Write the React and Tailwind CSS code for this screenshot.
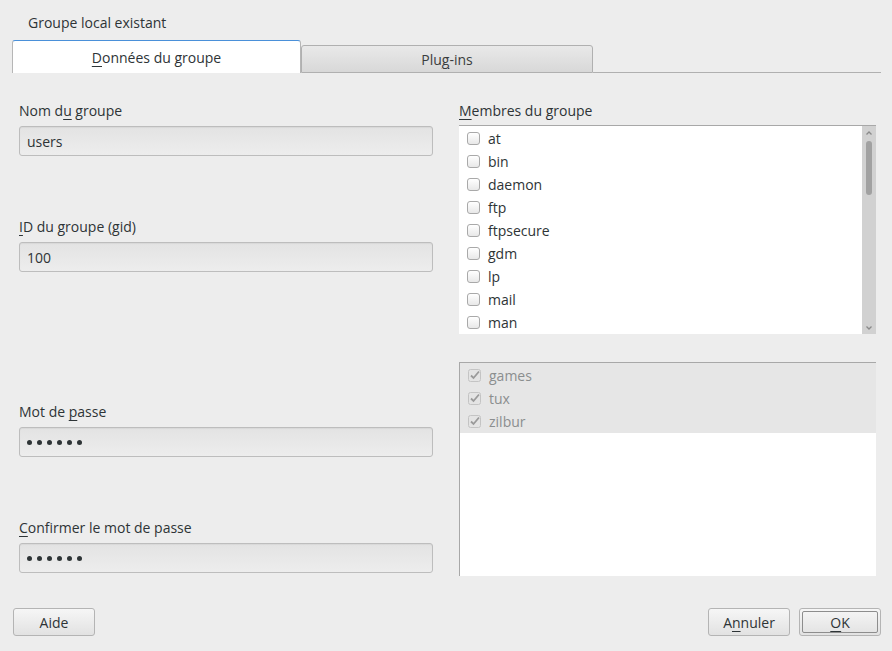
import React from "react";

const font = { fontFamily: '"Open Sans", "Noto Sans", sans-serif' };

function U({ children }) {
  return <span className="underline underline-offset-[3px] decoration-1">{children}</span>;
}

function Field({ label, value, mt }) {
  return (
    <div className={mt}>
      <div className="h-[18px] leading-[18px] text-[14px] text-[#2e3436]">{label}</div>
      <div className="mt-[6px] h-[30px] w-[414px] rounded-[3px] border border-[#bdbdbd] bg-gradient-to-b from-[#e3e3e3] to-[#ededed] shadow-[inset_0_1px_1px_rgba(0,0,0,0.05)] flex items-center px-[7px] text-[14px] text-[#2e3436]">
        {value}
      </div>
    </div>
  );
}

function Dots() {
  return (
    <div className="flex gap-[5px]">
      {[0, 1, 2, 3, 4, 5].map((i) => (
        <span key={i} className="block w-[5px] h-[5px] rounded-full bg-[#2e3436]" />
      ))}
    </div>
  );
}

function Box({ checked }) {
  if (checked) {
    return (
      <svg width="13" height="13" viewBox="0 0 13 13" className="shrink-0">
        <rect x="0.5" y="0.5" width="12" height="12" rx="2" fill="#e4e4e4" stroke="#c4c4c4" />
        <path d="M3 6.5 L5.5 9 L11 2.5" fill="none" stroke="#9a9a9a" strokeWidth="1.8" />
      </svg>
    );
  }
  return (
    <span className="block shrink-0 w-[13px] h-[13px] rounded-[3px] border border-[#a9a9a9] bg-gradient-to-b from-[#ffffff] to-[#e8e8e8]" />
  );
}

function Row({ name, checked }) {
  return (
    <div className="h-[23px] flex items-center pl-[8px] gap-[8px]">
      <Box checked={checked} />
      <span className={"text-[14px] " + (checked ? "text-[#8b8e8f]" : "text-[#2e3436]")}>{name}</span>
    </div>
  );
}

function Button({ children, focus }) {
  return (
    <div className="w-[82px] h-[28px] rounded-[3px] border border-[#b4b4b4] bg-gradient-to-b from-[#f6f6f6] to-[#e2e2e2] flex items-center justify-center p-[2px]">
      <div className={"w-full h-full flex items-center justify-center text-[14px] text-[#2e3436] " + (focus ? "border border-[#8d8d8d] rounded-[2px]" : "")}>
        {children}
      </div>
    </div>
  );
}

export default function App() {
  const members = ["at", "bin", "daemon", "ftp", "ftpsecure", "gdm", "lp", "mail", "man"];
  return (
    <div style={font} className="w-[892px] h-[651px] bg-[#ededed] flex flex-col overflow-hidden text-[#2e3436]">
      <div className="h-[40px] pl-[28px] pt-[14px] text-[14px] leading-[18px]">Groupe local existant</div>
      <div className="flex items-end h-[33px] pl-[12px] pr-[11px]">
        <div className="w-[289px] h-[33px] bg-white rounded-t-[3px] border border-b-0 border-[#b6b6b6] border-t-[#4a90d9] flex items-center justify-center text-[14px] pt-[1px]">
          <span>
            <U>D</U>onnées du groupe
          </span>
        </div>
        <div className="w-[292px] h-[28px] rounded-t-[3px] border border-[#b0b0b0] bg-gradient-to-b from-[#e9e9e9] to-[#d8d8d8] flex items-center justify-center text-[14px] text-[#3a3d3e]">
          <span>
            Plu<U>g</U>-ins
          </span>
        </div>
        <div className="flex-1 h-[1px] bg-[#b0b0b0]" />
      </div>
      <div className="flex flex-1">
        <div className="w-[414px] ml-[19px] pt-[29px]">
          <Field label={<span>Nom d<U>u</U> groupe</span>} value="users" />
          <Field mt="mt-[62px]" label={<span><U>I</U>D du groupe (gid)</span>} value="100" />
          <Field mt="mt-[131px]" label={<span>Mot de <U>p</U>asse</span>} value={<Dots />} />
          <Field mt="mt-[62px]" label={<span><U>C</U>onfirmer le mot de passe</span>} value={<Dots />} />
        </div>
        <div className="w-[417px] ml-[26px] pt-[29px] flex flex-col">
          <div className="h-[18px] leading-[18px] text-[14px]">
            <U>M</U>embres du groupe
          </div>
          <div className="mt-[5px] h-[209px] bg-white border-t border-[#a8a8a8] flex">
            <div className="flex-1 pt-[1px] overflow-hidden">
              {members.map((m) => (
                <Row key={m} name={m} />
              ))}
            </div>
            <div className="w-[14px] bg-[#d1d1d1] flex flex-col items-center">
              <svg width="8" height="6" viewBox="0 0 8 6" className="mt-[4px]">
                <path d="M1.5 4.5 L4 2 L6.5 4.5" fill="none" stroke="#8a8a8a" strokeWidth="1.3" />
              </svg>
              <div className="mt-[5px] w-[6px] h-[54px] rounded-full bg-[#a1a1a1]" />
              <div className="flex-1" />
              <svg width="8" height="6" viewBox="0 0 8 6" className="mb-[3px]">
                <path d="M1.5 1.5 L4 4 L6.5 1.5" fill="none" stroke="#8a8a8a" strokeWidth="1.3" />
              </svg>
            </div>
          </div>
          <div className="mt-[28px] h-[214px] bg-white border-t border-l border-[#a8a8a8]">
            <div className="bg-[#e6e6e6] pt-[1px]">
              <Row name="games" checked />
              <Row name="tux" checked />
              <Row name="zilbur" checked />
            </div>
          </div>
        </div>
      </div>
      <div className="h-[75px] flex items-start pt-[32px] pl-[13px] pr-[11px]">
        <Button>Aide</Button>
        <div className="flex-1" />
        <Button>
          <span>
            A<U>n</U>nuler
          </span>
        </Button>
        <div className="w-[9px]" />
        <Button focus>
          <span>
            <U>O</U>K
          </span>
        </Button>
      </div>
    </div>
  );
}
